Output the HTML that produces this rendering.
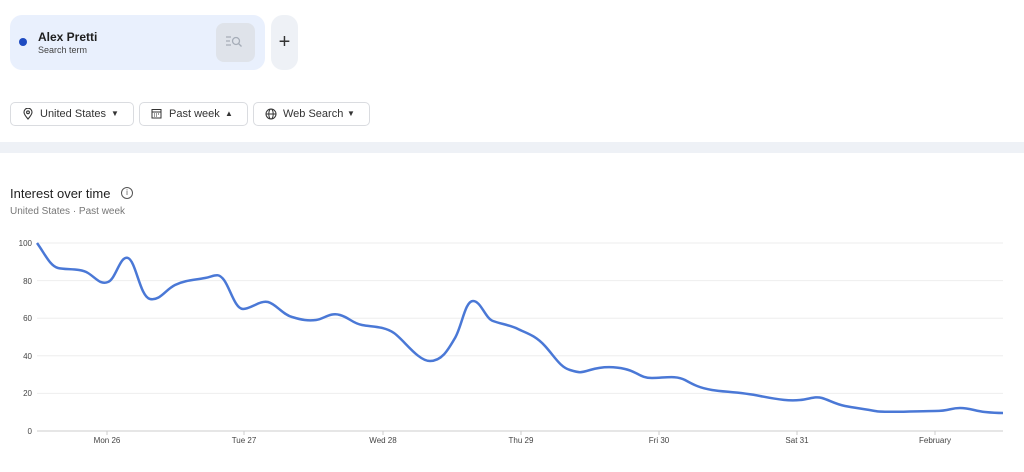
<!DOCTYPE html><html><head><style>
body{margin:0;width:1024px;height:472px;background:#fff;font-family:"Liberation Sans",sans-serif;position:relative;overflow:hidden;color:#1f1f1f}
.abs{position:absolute}
.card{left:10px;top:15px;width:255px;height:55px;background:#e9f0fd;border-radius:12px}
.plus{left:271px;top:15px;width:27px;height:55px;background:#eef1f6;border-radius:12px;font-size:20px;text-align:center;line-height:55px;color:#333}
.pill{top:102px;height:22px;border:1px solid #dadce0;border-radius:5px;font-size:11px;line-height:22px;color:#333}
.band{left:0;top:142px;width:1024px;height:11px;background:#eef1f6}
</style></head><body>
<div class="abs card"></div>
<div class="abs" style="left:19px;top:38px;width:8px;height:8px;border-radius:50%;background:#1e4bc1"></div>
<div class="abs" style="left:38px;top:30px;font-size:12px;font-weight:bold">Alex Pretti</div>
<div class="abs" style="left:38px;top:45px;font-size:9px;color:#444">Search term</div>
<div class="abs" style="left:216px;top:23px;width:39px;height:39px;background:#dfe3ea;border-radius:8px"></div>
<svg class="abs" style="left:224px;top:33px" width="22" height="18" viewBox="0 0 22 18" fill="none" stroke="#a6adb8" stroke-width="1.3"><path d="M2 4h5M2 8h4M2 12h5"/><circle cx="12" cy="8" r="3.5"/><path d="M14.5 10.5l3 3"/></svg>
<div class="abs plus">+</div>
<div class="abs pill" style="left:10px;width:122px"><svg style="position:absolute;left:12px;top:5px" width="10" height="12" viewBox="0 0 10 12" fill="none" stroke="#333" stroke-width="1.1"><path d="M5 11C2 7.5 1 6 1 4.2A4 4 0 0 1 9 4.2C9 6 8 7.5 5 11Z"/><circle cx="5" cy="4.3" r="1.4"/></svg><span style="position:absolute;left:29px">United States</span><span style="position:absolute;left:100px;font-size:8px">▼</span></div>
<div class="abs pill" style="left:139px;width:107px"><svg style="position:absolute;left:11px;top:5px" width="11" height="11" viewBox="0 0 11 11" fill="none" stroke="#333"><rect x="1" y="1.5" width="9" height="8.5"/><path d="M1 4h9M3 6h1M5 6h1M7 6h1M3 8h1M5 8h1"/></svg><span style="position:absolute;left:29px">Past week</span><span style="position:absolute;left:85px;font-size:8px">▲</span></div>
<div class="abs pill" style="left:253px;width:115px"><svg style="position:absolute;left:11px;top:5px" width="12" height="12" viewBox="0 0 12 12" fill="none" stroke="#333"><circle cx="6" cy="6" r="5"/><ellipse cx="6" cy="6" rx="2.2" ry="5"/><path d="M1 6h10"/></svg><span style="position:absolute;left:29px">Web Search</span><span style="position:absolute;left:93px;font-size:8px">▼</span></div>
<div class="abs band"></div>
<div class="abs" style="left:10px;top:186px;font-size:13px">Interest over time</div>
<div class="abs" style="left:121px;top:187px;width:10px;height:10px;border:1px solid #555;border-radius:50%;font-size:8px;text-align:center;line-height:10px;color:#555">i</div>
<div class="abs" style="left:10px;top:206px;font-size:10px;color:#777">United States · Past week</div>
<svg class="abs" style="left:0;top:0" width="1024" height="472" font-family="Liberation Sans" font-size="8" fill="#444">
<g stroke="#eee" stroke-width="1"><path d="M37 243H1003M37 280.6H1003M37 318.2H1003M37 355.8H1003M37 393.4H1003"/></g>
<path d="M37 431H1003" stroke="#ccc"/>
<g text-anchor="end"><text x="32" y="246">100</text><text x="32" y="284">80</text><text x="32" y="321">60</text><text x="32" y="359">40</text><text x="32" y="396">20</text><text x="32" y="434">0</text></g>
<g stroke="#ccc"><path d="M107 431v4M244 431v4M383 431v4M521 431v4M659 431v4M797 431v4M935 431v4"/></g>
<g text-anchor="middle"><text x="107" y="443">Mon 26</text><text x="244" y="443">Tue 27</text><text x="383" y="443">Wed 28</text><text x="521" y="443">Thu 29</text><text x="659" y="443">Fri 30</text><text x="797" y="443">Sat 31</text><text x="935" y="443">February</text></g>
<path fill="none" stroke="#4a78d6" stroke-width="2.5" stroke-linejoin="round" d="M37 243C45 254 50 266 58 268S80 268 88 273S100 285 108 282S120 255 128 258S140 297 150 299S165 290 175 285S195 280 205 278S218 272 224 280S235 309 243 309S260 300 268 302S282 314 292 317S308 321 316 320S330 312 340 315S352 323 362 325S384 326 394 333S418 361 430 361S448 350 455 338S465 301 473 301S485 318 493 321S510 325 518 329S535 335 545 346S560 367 570 370S580 373 590 370S612 366 625 369S640 378 652 378S676 375 685 380S700 388 712 390S740 392 760 396S790 401 800 400S815 396 822 398S835 404 845 406S865 409 875 411S920 411 935 411S950 408 960 408S975 411 985 412S1000 413 1003 413"/>
</svg>
</body></html>
